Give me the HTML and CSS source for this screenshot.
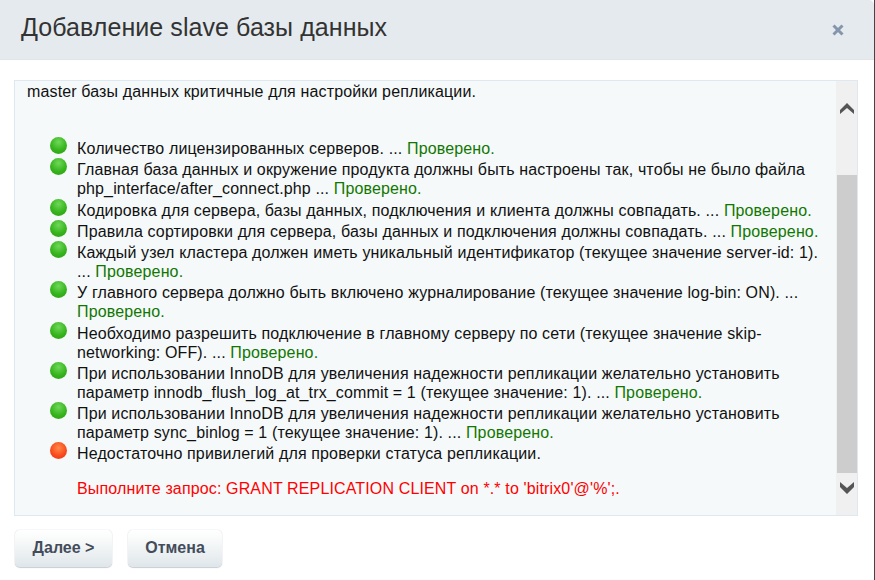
FILE: index.html
```html
<!DOCTYPE html>
<html lang="en">
<head>
    <meta charset="UTF-8">
    <title>Добавление slave базы данных</title>
    <link rel="stylesheet" href="styles.css">
</head>
<body>
    <div class="dialog">
        <div class="dialog-head">
            <h1>Добавление slave базы данных</h1>
            <svg class="close" width="12" height="12" viewBox="0 0 12 12">
                <path d="M1.5 1.5L10.5 10.5M10.5 1.5L1.5 10.5" stroke="#8595ab" stroke-width="3"/>
            </svg>
        </div>
        <div class="dialog-body">
            <div class="scroll-box">
                <div class="scroll-content">
                    <p class="intro">master базы данных критичные для настройки репликации.</p>
                    <ul class="checks">
                        <li class="ok">Количество лицензированных серверов. ... <span class="passed">Проверено.</span></li>
                        <li class="ok">Главная база данных и окружение продукта должны быть настроены так, чтобы не было файла php_interface/after_connect.php ... <span class="passed">Проверено.</span></li>
                        <li class="ok">Кодировка для сервера, базы данных, подключения и клиента должны совпадать. ... <span class="passed">Проверено.</span></li>
                        <li class="ok">Правила сортировки для сервера, базы данных и подключения должны совпадать. ... <span class="passed">Проверено.</span></li>
                        <li class="ok">Каждый узел кластера должен иметь уникальный идентификатор (текущее значение server-id: 1). ... <span class="passed">Проверено.</span></li>
                        <li class="ok">У главного сервера должно быть включено журналирование (текущее значение log-bin: ON). ... <span class="passed">Проверено.</span></li>
                        <li class="ok">Необходимо разрешить подключение в главному серверу по сети (текущее значение skip-networking: OFF). ... <span class="passed">Проверено.</span></li>
                        <li class="ok">При использовании InnoDB для увеличения надежности репликации желательно установить параметр innodb_flush_log_at_trx_commit = 1 (текущее значение: 1). ... <span class="passed">Проверено.</span></li>
                        <li class="ok">При использовании InnoDB для увеличения надежности репликации желательно установить параметр sync_binlog = 1 (текущее значение: 1). ... <span class="passed">Проверено.</span></li>
                        <li class="fail">Недостаточно привилегий для проверки статуса репликации.<p class="hint">Выполните запрос: GRANT REPLICATION CLIENT on *.* to 'bitrix0'@'%';.</p></li>
                    </ul>
                </div>
                <div class="scrollbar">
                    <div class="track-top">
                        <svg class="arrow" width="14" height="11" viewBox="0 0 14 11">
                            <polygon points="7,0 14,7 14,11 7,5 0,11 0,7" fill="#555"/>
                        </svg>
                    </div>
                    <div class="thumb"></div>
                    <div class="track-bottom">
                        <svg class="arrow" width="14" height="12" viewBox="0 0 14 12">
                            <polygon points="0,0 7,6 14,0 14,5 7,12 0,5" fill="#555"/>
                        </svg>
                    </div>
                </div>
            </div>
        </div>
        <div class="dialog-foot">
            <button class="next">Далее &gt;</button>
            <button class="cancel">Отмена</button>
        </div>
    </div>
</body>
</html>
```

FILE: styles.css
```css
html, body {
    margin: 0;
    padding: 0;
    background: #fff;
}
body {
    font-family: "Liberation Sans", Arial, sans-serif;
    font-size: 16px;
    color: #111;
    overflow: hidden;
}
.dialog {
    width: 874px;
    height: 580px;
    border-right: 1px solid #444;
    box-sizing: content-box;
}
.dialog-head {
    height: 59px;
    background: #e4eaee;
    border-bottom: 1px solid #e1e5e8;
    border-top-right-radius: 5px;
    display: flex;
    align-items: center;
    justify-content: space-between;
    padding: 0 30px 0 21px;
}
.dialog-head h1 {
    margin: 0 0 5px;
    font-size: 25px;
    font-weight: normal;
    letter-spacing: 0.07px;
    color: #333;
}
.close {
    display: block;
}
.dialog-body {
    padding: 20px 16px 0 14px;
}
.scroll-box {
    height: 434px;
    border: 1px solid #dde8f0;
    background: #f5f9fa;
    display: flex;
}
.scroll-content {
    flex: 1;
    overflow: hidden;
    padding: 2px 0 0 12px;
    letter-spacing: 0.14px;
}
.intro {
    margin: 0 0 37px;
    line-height: 18px;
}
.checks {
    list-style: none;
    margin: 0;
    padding: 0;
}
.checks li {
    position: relative;
    padding: 1px 12px 1.25px 50px;
    line-height: 19px;
}
.checks li::before {
    content: "";
    position: absolute;
    left: 23px;
    top: -1px;
    width: 17px;
    height: 17px;
    border-radius: 50%;
}
.checks .ok::before {
    background: radial-gradient(circle at 50% 30%, #6fd85a 0, #37b51d 55%, #2a9c12 100%);
}
.checks .fail::before {
    background: radial-gradient(circle at 50% 35%, #ff8a4a 0, #f9461a 60%, #e8390e 100%);
}
.passed {
    color: #117700;
}
.hint {
    margin: 16px 0 0;
    color: #f00;
}
.scrollbar {
    width: 21px;
    background: #f0f0f0;
    display: flex;
    flex-direction: column;
    align-items: center;
}
.track-top {
    height: 94px;
    width: 100%;
    padding-top: 22px;
    box-sizing: border-box;
}
.thumb {
    width: 20px;
    height: 298px;
    background: #cdcdcd;
    margin-left: 1px;
}
.track-bottom {
    flex: 1;
    width: 100%;
    padding-top: 9px;
    box-sizing: border-box;
}
.arrow {
    display: block;
    margin: 0 auto;
}
.dialog-foot {
    padding: 14px 0 0 15px;
    display: flex;
    gap: 16px;
}
.dialog-foot button {
    height: 37px;
    border: 0;
    border-radius: 5px;
    background: linear-gradient(#ffffff, #f7f9f9 30%, #dfe6ea);
    box-shadow: 0 0 1px rgba(90, 110, 125, 0.5), 0 1px 1px rgba(90, 110, 125, 0.3);
    font-family: "Liberation Sans", Arial, sans-serif;
    font-size: 16px;
    font-weight: bold;
    color: #434c5a;
    padding: 0 0 2px;
}
.next {
    width: 97px;
}
.cancel {
    width: 94px;
}
```
